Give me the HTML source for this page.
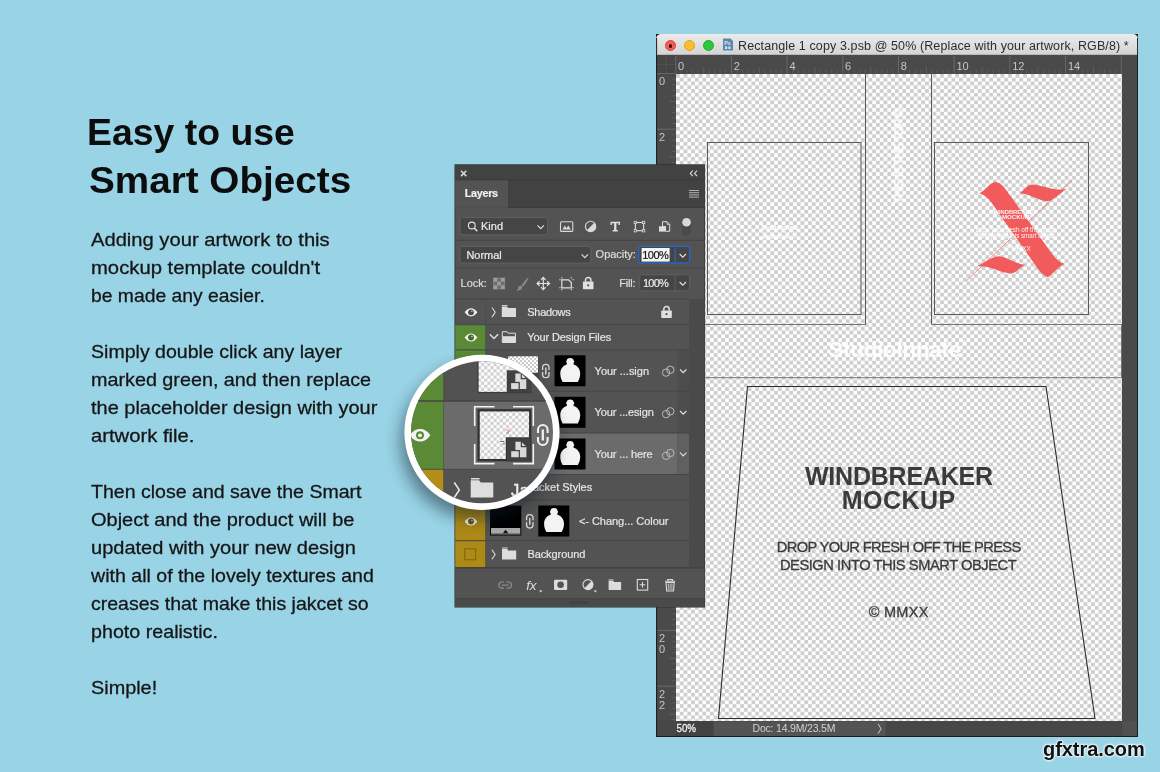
<!DOCTYPE html>
<html lang="en">
<head>
<meta charset="utf-8">
<title>Easy to use Smart Objects</title>
<style>
*{box-sizing:border-box;margin:0;padding:0}
html,body{width:1160px;height:772px;overflow:hidden}
body{background:#99d3e6;font-family:"Liberation Sans",Arial,sans-serif;position:relative;color:#111}
.abs{position:absolute}
#stage{position:absolute;left:0;top:0;width:1160px;height:772px;will-change:transform;transform:translateZ(0)}
/* ---------- left copy ---------- */
#copy h1{position:absolute;left:88px;top:108.900px;font-size:37px;line-height:48.2px;font-weight:700;color:#0d0d0d;white-space:nowrap}
#copy h1 span{display:inline-block;position:relative;transform-origin:0 50%}
#copy p{-webkit-text-stroke:.28px #151515;position:absolute;left:91px;font-size:18.500px;line-height:28px;color:#151515;white-space:nowrap;transform-origin:0 50%}
/* ---------- document window ---------- */
#win{position:absolute;left:656px;top:34px;width:482px;height:703px;background:#4a4a4a;overflow:hidden;}
#tbar{position:absolute;left:0;top:0;width:482px;height:21px;background:#1c1c1c}
#tbar:before{content:"";position:absolute;left:.4px;top:.3px;right:.3px;bottom:0;border-radius:5px 5px 0 0;background:linear-gradient(#ececec,#d4d4d4);border-bottom:1px solid #b8b8b8}
#tbar .dot{position:absolute;top:6.100px;width:11.400px;height:11.400px;border-radius:50%}
#tbar .t{position:absolute;left:82px;top:3.6px;font-size:12.5px;line-height:16px;color:#2e2e2e;white-space:nowrap;letter-spacing:.11px}
#canvas{position:absolute;left:19.7px;top:39.5px;width:446.5px;height:647.5px;background:repeating-conic-gradient(#fdfdfd 0% 25%,#cecece 0% 50%) 0 0/7.55px 7.55px}
#hr{position:absolute;left:0;top:21px;width:482px;height:19px;background:#4a4a4a}
#vr{position:absolute;left:0;top:40px;width:20px;height:647px;background:#4a4a4a}
#status{position:absolute;left:0;top:687px;width:482px;height:16px;background:#4a4a4a}
.rl{position:absolute;font-size:12px;color:#c9c9c9;line-height:12px}
/* ---------- watermark ---------- */
#wm{position:absolute;left:1043px;top:738px;font-size:20px;font-weight:700;letter-spacing:-.05px;color:#111;text-shadow:0 0 3px #fff,0 0 3px #fff,0 0 2px #fff}
</style>
</head>
<body>
<div id="stage">

<div id="copy">
<h1><span style="left:-1px;transform:scaleX(1.011)">Easy to use</span><br><span style="left:1px;transform:scaleX(1.045)">Smart Objects</span></h1>
<p style="top:225.6px;transform:scaleX(1.0897)">Adding your artwork to this</p>
<p style="top:253.6px;transform:scaleX(1.0950)">mockup template couldn't</p>
<p style="top:281.6px;transform:scaleX(1.0433)">be made any easier.</p>
<p style="top:337.6px;transform:scaleX(1.0569)">Simply double click any layer</p>
<p style="top:365.6px;transform:scaleX(1.0678)">marked green, and then replace</p>
<p style="top:393.6px;transform:scaleX(1.0792)">the placeholder design with your</p>
<p style="top:421.6px;transform:scaleX(1.0939)">artwork file.</p>
<p style="top:477.6px;transform:scaleX(1.0565)">Then close and save the Smart</p>
<p style="top:505.6px;transform:scaleX(1.0810)">Object and the product will be</p>
<p style="top:533.6px;transform:scaleX(1.0817)">updated with your new design</p>
<p style="top:561.6px;transform:scaleX(1.0579)">with all of the lovely textures and</p>
<p style="top:589.6px;transform:scaleX(1.0544)">creases that make this jakcet so</p>
<p style="top:617.6px;transform:scaleX(1.0634)">photo realistic.</p>
<p style="top:673.6px;transform:scaleX(1.0723)">Simple!</p>
</div>

<div id="win">
  <div id="tbar">
    <div class="dot" style="left:8.900px;background:#f25e57;border:.5px solid #d9463f"></div>
    <div class="dot" style="left:27.700px;background:#fbbe2f;border:.5px solid #dda022"></div>
    <div class="dot" style="left:46.600px;background:#2bc840;border:.5px solid #1eaa30"></div>
    <div class="abs" style="left:12.800px;top:10px;width:3.600px;height:3.600px;border-radius:50%;background:#4a0a07"></div>
    <div class="t">Rectangle 1 copy 3.psb @ 50% (Replace with your artwork, RGB/8) *</div>
  </div>
  <div id="hr"></div>
  <div id="vr"></div>
  <div id="canvas"></div>
  <div id="status"></div>
</div>

<svg id="art" class="abs" style="left:656px;top:34px" width="482" height="703" viewBox="656 34 482 703">
<style>.rt{font:11px "Liberation Sans",Arial,sans-serif;fill:#c6c6c6}.ol{fill:none;stroke:#5a5a5a;stroke-width:1}.wt{font-family:"Liberation Sans",Arial,sans-serif;font-weight:700;fill:#fff}.dk{font-family:"Liberation Sans",Arial,sans-serif;fill:#3b3b3b}</style>
<g id="rulers">
<rect x="656" y="55" width="20" height="18.5" fill="#454545"/>
<path d="M656.5 64.5H675.5M666 55.5V73" stroke="#666" stroke-width=".7" stroke-dasharray="1 1"/>
<path d="M675.7 56V73.5" stroke="#6c6c6c" stroke-width=".9"/>
<path d="M681.3 70V73.5" stroke="#636363" stroke-width=".7"/>
<path d="M686.8 70V73.5" stroke="#636363" stroke-width=".7"/>
<path d="M692.4 70V73.5" stroke="#636363" stroke-width=".7"/>
<path d="M698.0 70V73.5" stroke="#636363" stroke-width=".7"/>
<path d="M703.6 67.5V73.5" stroke="#696969" stroke-width=".7"/>
<path d="M709.1 70V73.5" stroke="#636363" stroke-width=".7"/>
<path d="M714.7 70V73.5" stroke="#636363" stroke-width=".7"/>
<path d="M720.3 70V73.5" stroke="#636363" stroke-width=".7"/>
<path d="M725.8 70V73.5" stroke="#636363" stroke-width=".7"/>
<path d="M731.4 56V73.5" stroke="#6c6c6c" stroke-width=".9"/>
<path d="M737.0 70V73.5" stroke="#636363" stroke-width=".7"/>
<path d="M742.5 70V73.5" stroke="#636363" stroke-width=".7"/>
<path d="M748.1 70V73.5" stroke="#636363" stroke-width=".7"/>
<path d="M753.7 70V73.5" stroke="#636363" stroke-width=".7"/>
<path d="M759.2 67.5V73.5" stroke="#696969" stroke-width=".7"/>
<path d="M764.8 70V73.5" stroke="#636363" stroke-width=".7"/>
<path d="M770.4 70V73.5" stroke="#636363" stroke-width=".7"/>
<path d="M776.0 70V73.5" stroke="#636363" stroke-width=".7"/>
<path d="M781.5 70V73.5" stroke="#636363" stroke-width=".7"/>
<path d="M787.1 56V73.5" stroke="#6c6c6c" stroke-width=".9"/>
<path d="M792.7 70V73.5" stroke="#636363" stroke-width=".7"/>
<path d="M798.2 70V73.5" stroke="#636363" stroke-width=".7"/>
<path d="M803.8 70V73.5" stroke="#636363" stroke-width=".7"/>
<path d="M809.4 70V73.5" stroke="#636363" stroke-width=".7"/>
<path d="M815.0 67.5V73.5" stroke="#696969" stroke-width=".7"/>
<path d="M820.5 70V73.5" stroke="#636363" stroke-width=".7"/>
<path d="M826.1 70V73.5" stroke="#636363" stroke-width=".7"/>
<path d="M831.7 70V73.5" stroke="#636363" stroke-width=".7"/>
<path d="M837.2 70V73.5" stroke="#636363" stroke-width=".7"/>
<path d="M842.8 56V73.5" stroke="#6c6c6c" stroke-width=".9"/>
<path d="M848.4 70V73.5" stroke="#636363" stroke-width=".7"/>
<path d="M853.9 70V73.5" stroke="#636363" stroke-width=".7"/>
<path d="M859.5 70V73.5" stroke="#636363" stroke-width=".7"/>
<path d="M865.1 70V73.5" stroke="#636363" stroke-width=".7"/>
<path d="M870.7 67.5V73.5" stroke="#696969" stroke-width=".7"/>
<path d="M876.2 70V73.5" stroke="#636363" stroke-width=".7"/>
<path d="M881.8 70V73.5" stroke="#636363" stroke-width=".7"/>
<path d="M887.4 70V73.5" stroke="#636363" stroke-width=".7"/>
<path d="M892.9 70V73.5" stroke="#636363" stroke-width=".7"/>
<path d="M898.5 56V73.5" stroke="#6c6c6c" stroke-width=".9"/>
<path d="M904.1 70V73.5" stroke="#636363" stroke-width=".7"/>
<path d="M909.6 70V73.5" stroke="#636363" stroke-width=".7"/>
<path d="M915.2 70V73.5" stroke="#636363" stroke-width=".7"/>
<path d="M920.8 70V73.5" stroke="#636363" stroke-width=".7"/>
<path d="M926.4 67.5V73.5" stroke="#696969" stroke-width=".7"/>
<path d="M931.9 70V73.5" stroke="#636363" stroke-width=".7"/>
<path d="M937.5 70V73.5" stroke="#636363" stroke-width=".7"/>
<path d="M943.1 70V73.5" stroke="#636363" stroke-width=".7"/>
<path d="M948.6 70V73.5" stroke="#636363" stroke-width=".7"/>
<path d="M954.2 56V73.5" stroke="#6c6c6c" stroke-width=".9"/>
<path d="M959.8 70V73.5" stroke="#636363" stroke-width=".7"/>
<path d="M965.3 70V73.5" stroke="#636363" stroke-width=".7"/>
<path d="M970.9 70V73.5" stroke="#636363" stroke-width=".7"/>
<path d="M976.5 70V73.5" stroke="#636363" stroke-width=".7"/>
<path d="M982.1 67.5V73.5" stroke="#696969" stroke-width=".7"/>
<path d="M987.6 70V73.5" stroke="#636363" stroke-width=".7"/>
<path d="M993.2 70V73.5" stroke="#636363" stroke-width=".7"/>
<path d="M998.8 70V73.5" stroke="#636363" stroke-width=".7"/>
<path d="M1004.3 70V73.5" stroke="#636363" stroke-width=".7"/>
<path d="M1009.9 56V73.5" stroke="#6c6c6c" stroke-width=".9"/>
<path d="M1015.5 70V73.5" stroke="#636363" stroke-width=".7"/>
<path d="M1021.0 70V73.5" stroke="#636363" stroke-width=".7"/>
<path d="M1026.6 70V73.5" stroke="#636363" stroke-width=".7"/>
<path d="M1032.2 70V73.5" stroke="#636363" stroke-width=".7"/>
<path d="M1037.8 67.5V73.5" stroke="#696969" stroke-width=".7"/>
<path d="M1043.3 70V73.5" stroke="#636363" stroke-width=".7"/>
<path d="M1048.9 70V73.5" stroke="#636363" stroke-width=".7"/>
<path d="M1054.5 70V73.5" stroke="#636363" stroke-width=".7"/>
<path d="M1060.0 70V73.5" stroke="#636363" stroke-width=".7"/>
<path d="M1065.6 56V73.5" stroke="#6c6c6c" stroke-width=".9"/>
<path d="M1071.2 70V73.5" stroke="#636363" stroke-width=".7"/>
<path d="M1076.7 70V73.5" stroke="#636363" stroke-width=".7"/>
<path d="M1082.3 70V73.5" stroke="#636363" stroke-width=".7"/>
<path d="M1087.9 70V73.5" stroke="#636363" stroke-width=".7"/>
<path d="M1093.5 67.5V73.5" stroke="#696969" stroke-width=".7"/>
<path d="M1099.0 70V73.5" stroke="#636363" stroke-width=".7"/>
<path d="M1104.6 70V73.5" stroke="#636363" stroke-width=".7"/>
<path d="M1110.2 70V73.5" stroke="#636363" stroke-width=".7"/>
<path d="M1115.7 70V73.5" stroke="#636363" stroke-width=".7"/>
<path d="M1121.3 56V73.5" stroke="#6c6c6c" stroke-width=".9"/>
<path d="M657 73.5H675.7" stroke="#6c6c6c" stroke-width=".9"/>
<path d="M672 79.1H675.7" stroke="#636363" stroke-width=".7"/>
<path d="M672 84.6H675.7" stroke="#636363" stroke-width=".7"/>
<path d="M672 90.2H675.7" stroke="#636363" stroke-width=".7"/>
<path d="M672 95.8H675.7" stroke="#636363" stroke-width=".7"/>
<path d="M669.5 101.3H675.7" stroke="#696969" stroke-width=".7"/>
<path d="M672 106.9H675.7" stroke="#636363" stroke-width=".7"/>
<path d="M672 112.5H675.7" stroke="#636363" stroke-width=".7"/>
<path d="M672 118.1H675.7" stroke="#636363" stroke-width=".7"/>
<path d="M672 123.6H675.7" stroke="#636363" stroke-width=".7"/>
<path d="M657 129.2H675.7" stroke="#6c6c6c" stroke-width=".9"/>
<path d="M672 134.8H675.7" stroke="#636363" stroke-width=".7"/>
<path d="M672 140.3H675.7" stroke="#636363" stroke-width=".7"/>
<path d="M672 145.9H675.7" stroke="#636363" stroke-width=".7"/>
<path d="M672 151.5H675.7" stroke="#636363" stroke-width=".7"/>
<path d="M669.5 157.1H675.7" stroke="#696969" stroke-width=".7"/>
<path d="M672 162.6H675.7" stroke="#636363" stroke-width=".7"/>
<path d="M672 168.2H675.7" stroke="#636363" stroke-width=".7"/>
<path d="M672 173.8H675.7" stroke="#636363" stroke-width=".7"/>
<path d="M672 179.3H675.7" stroke="#636363" stroke-width=".7"/>
<path d="M657 184.9H675.7" stroke="#6c6c6c" stroke-width=".9"/>
<path d="M672 190.5H675.7" stroke="#636363" stroke-width=".7"/>
<path d="M672 196.0H675.7" stroke="#636363" stroke-width=".7"/>
<path d="M672 201.6H675.7" stroke="#636363" stroke-width=".7"/>
<path d="M672 207.2H675.7" stroke="#636363" stroke-width=".7"/>
<path d="M669.5 212.8H675.7" stroke="#696969" stroke-width=".7"/>
<path d="M672 218.3H675.7" stroke="#636363" stroke-width=".7"/>
<path d="M672 223.9H675.7" stroke="#636363" stroke-width=".7"/>
<path d="M672 229.5H675.7" stroke="#636363" stroke-width=".7"/>
<path d="M672 235.0H675.7" stroke="#636363" stroke-width=".7"/>
<path d="M657 240.6H675.7" stroke="#6c6c6c" stroke-width=".9"/>
<path d="M672 246.2H675.7" stroke="#636363" stroke-width=".7"/>
<path d="M672 251.7H675.7" stroke="#636363" stroke-width=".7"/>
<path d="M672 257.3H675.7" stroke="#636363" stroke-width=".7"/>
<path d="M672 262.9H675.7" stroke="#636363" stroke-width=".7"/>
<path d="M669.5 268.4H675.7" stroke="#696969" stroke-width=".7"/>
<path d="M672 274.0H675.7" stroke="#636363" stroke-width=".7"/>
<path d="M672 279.6H675.7" stroke="#636363" stroke-width=".7"/>
<path d="M672 285.2H675.7" stroke="#636363" stroke-width=".7"/>
<path d="M672 290.7H675.7" stroke="#636363" stroke-width=".7"/>
<path d="M657 296.3H675.7" stroke="#6c6c6c" stroke-width=".9"/>
<path d="M672 301.9H675.7" stroke="#636363" stroke-width=".7"/>
<path d="M672 307.4H675.7" stroke="#636363" stroke-width=".7"/>
<path d="M672 313.0H675.7" stroke="#636363" stroke-width=".7"/>
<path d="M672 318.6H675.7" stroke="#636363" stroke-width=".7"/>
<path d="M669.5 324.1H675.7" stroke="#696969" stroke-width=".7"/>
<path d="M672 329.7H675.7" stroke="#636363" stroke-width=".7"/>
<path d="M672 335.3H675.7" stroke="#636363" stroke-width=".7"/>
<path d="M672 340.9H675.7" stroke="#636363" stroke-width=".7"/>
<path d="M672 346.4H675.7" stroke="#636363" stroke-width=".7"/>
<path d="M657 352.0H675.7" stroke="#6c6c6c" stroke-width=".9"/>
<path d="M672 357.6H675.7" stroke="#636363" stroke-width=".7"/>
<path d="M672 363.1H675.7" stroke="#636363" stroke-width=".7"/>
<path d="M672 368.7H675.7" stroke="#636363" stroke-width=".7"/>
<path d="M672 374.3H675.7" stroke="#636363" stroke-width=".7"/>
<path d="M669.5 379.9H675.7" stroke="#696969" stroke-width=".7"/>
<path d="M672 385.4H675.7" stroke="#636363" stroke-width=".7"/>
<path d="M672 391.0H675.7" stroke="#636363" stroke-width=".7"/>
<path d="M672 396.6H675.7" stroke="#636363" stroke-width=".7"/>
<path d="M672 402.1H675.7" stroke="#636363" stroke-width=".7"/>
<path d="M657 407.7H675.7" stroke="#6c6c6c" stroke-width=".9"/>
<path d="M672 413.3H675.7" stroke="#636363" stroke-width=".7"/>
<path d="M672 418.8H675.7" stroke="#636363" stroke-width=".7"/>
<path d="M672 424.4H675.7" stroke="#636363" stroke-width=".7"/>
<path d="M672 430.0H675.7" stroke="#636363" stroke-width=".7"/>
<path d="M669.5 435.6H675.7" stroke="#696969" stroke-width=".7"/>
<path d="M672 441.1H675.7" stroke="#636363" stroke-width=".7"/>
<path d="M672 446.7H675.7" stroke="#636363" stroke-width=".7"/>
<path d="M672 452.3H675.7" stroke="#636363" stroke-width=".7"/>
<path d="M672 457.8H675.7" stroke="#636363" stroke-width=".7"/>
<path d="M657 463.4H675.7" stroke="#6c6c6c" stroke-width=".9"/>
<path d="M672 469.0H675.7" stroke="#636363" stroke-width=".7"/>
<path d="M672 474.5H675.7" stroke="#636363" stroke-width=".7"/>
<path d="M672 480.1H675.7" stroke="#636363" stroke-width=".7"/>
<path d="M672 485.7H675.7" stroke="#636363" stroke-width=".7"/>
<path d="M669.5 491.2H675.7" stroke="#696969" stroke-width=".7"/>
<path d="M672 496.8H675.7" stroke="#636363" stroke-width=".7"/>
<path d="M672 502.4H675.7" stroke="#636363" stroke-width=".7"/>
<path d="M672 508.0H675.7" stroke="#636363" stroke-width=".7"/>
<path d="M672 513.5H675.7" stroke="#636363" stroke-width=".7"/>
<path d="M657 519.1H675.7" stroke="#6c6c6c" stroke-width=".9"/>
<path d="M672 524.7H675.7" stroke="#636363" stroke-width=".7"/>
<path d="M672 530.2H675.7" stroke="#636363" stroke-width=".7"/>
<path d="M672 535.8H675.7" stroke="#636363" stroke-width=".7"/>
<path d="M672 541.4H675.7" stroke="#636363" stroke-width=".7"/>
<path d="M669.5 547.0H675.7" stroke="#696969" stroke-width=".7"/>
<path d="M672 552.5H675.7" stroke="#636363" stroke-width=".7"/>
<path d="M672 558.1H675.7" stroke="#636363" stroke-width=".7"/>
<path d="M672 563.7H675.7" stroke="#636363" stroke-width=".7"/>
<path d="M672 569.2H675.7" stroke="#636363" stroke-width=".7"/>
<path d="M657 574.8H675.7" stroke="#6c6c6c" stroke-width=".9"/>
<path d="M672 580.4H675.7" stroke="#636363" stroke-width=".7"/>
<path d="M672 585.9H675.7" stroke="#636363" stroke-width=".7"/>
<path d="M672 591.5H675.7" stroke="#636363" stroke-width=".7"/>
<path d="M672 597.1H675.7" stroke="#636363" stroke-width=".7"/>
<path d="M669.5 602.6H675.7" stroke="#696969" stroke-width=".7"/>
<path d="M672 608.2H675.7" stroke="#636363" stroke-width=".7"/>
<path d="M672 613.8H675.7" stroke="#636363" stroke-width=".7"/>
<path d="M672 619.4H675.7" stroke="#636363" stroke-width=".7"/>
<path d="M672 624.9H675.7" stroke="#636363" stroke-width=".7"/>
<path d="M657 630.5H675.7" stroke="#6c6c6c" stroke-width=".9"/>
<path d="M672 636.1H675.7" stroke="#636363" stroke-width=".7"/>
<path d="M672 641.6H675.7" stroke="#636363" stroke-width=".7"/>
<path d="M672 647.2H675.7" stroke="#636363" stroke-width=".7"/>
<path d="M672 652.8H675.7" stroke="#636363" stroke-width=".7"/>
<path d="M669.5 658.4H675.7" stroke="#696969" stroke-width=".7"/>
<path d="M672 663.9H675.7" stroke="#636363" stroke-width=".7"/>
<path d="M672 669.5H675.7" stroke="#636363" stroke-width=".7"/>
<path d="M672 675.1H675.7" stroke="#636363" stroke-width=".7"/>
<path d="M672 680.6H675.7" stroke="#636363" stroke-width=".7"/>
<path d="M657 686.2H675.7" stroke="#6c6c6c" stroke-width=".9"/>
<path d="M672 691.8H675.7" stroke="#636363" stroke-width=".7"/>
<path d="M672 697.3H675.7" stroke="#636363" stroke-width=".7"/>
<path d="M672 702.9H675.7" stroke="#636363" stroke-width=".7"/>
<path d="M672 708.5H675.7" stroke="#636363" stroke-width=".7"/>
<path d="M669.5 714.0H675.7" stroke="#696969" stroke-width=".7"/>
<path d="M672 719.6H675.7" stroke="#636363" stroke-width=".7"/>
<text x="678.0" y="70" class="rt">0</text>
<text x="733.7" y="70" class="rt">2</text>
<text x="789.4" y="70" class="rt">4</text>
<text x="845.1" y="70" class="rt">6</text>
<text x="900.8" y="70" class="rt">8</text>
<text x="956.5" y="70" class="rt">10</text>
<text x="1012.2" y="70" class="rt">12</text>
<text x="1067.9" y="70" class="rt">14</text>
<text x="659" y="85.0" class="rt">0</text>
<text x="659" y="140.7" class="rt">2</text>
<text x="659" y="196.4" class="rt">4</text>
<text x="659" y="252.1" class="rt">6</text>
<text x="659" y="307.8" class="rt">8</text>
<text x="659" y="363.5" class="rt">1</text>
<text x="659" y="374.5" class="rt">0</text>
<text x="659" y="419.2" class="rt">1</text>
<text x="659" y="430.2" class="rt">2</text>
<text x="659" y="474.9" class="rt">1</text>
<text x="659" y="485.9" class="rt">4</text>
<text x="659" y="530.6" class="rt">1</text>
<text x="659" y="541.6" class="rt">6</text>
<text x="659" y="586.3" class="rt">1</text>
<text x="659" y="597.3" class="rt">8</text>
<text x="659" y="642.0" class="rt">2</text>
<text x="659" y="653.0" class="rt">0</text>
<text x="659" y="697.7" class="rt">2</text>
<text x="659" y="708.7" class="rt">2</text>
</g>
<g id="outlines">
<path class="ol" d="M865.5 73.5V324.5M931.5 73.5V324.5"/>
<rect class="ol" x="707.5" y="142.5" width="153.5" height="172"/>
<rect class="ol" x="934.5" y="142.5" width="154" height="172"/>
<path class="ol" style="stroke:#747474" d="M865.5 324.500H703V377.700H1121.500V324.500H931.500"/>
<path class="ol" style="stroke:#2e2e2e;stroke-width:1.100" d="M747.5 386.5H1046L1095 718.5H718.5Z"/>
</g>
<g id="arttext">
<text class="dk" x="805" y="484.800" font-size="25" font-weight="700" textLength="188" lengthAdjust="spacing" id="wb1">WINDBREAKER</text>
<text class="dk" x="841.800" y="508.500" font-size="25" font-weight="700" textLength="113.400" lengthAdjust="spacing" id="wb2">MOCKUP</text>
<text class="dk" x="776.800" y="552" font-size="14.700" stroke="#3b3b3b" stroke-width=".3" textLength="244.400" lengthAdjust="spacing" id="dr1">DROP YOUR FRESH OFF THE PRESS</text>
<text class="dk" x="779.900" y="569.500" font-size="14.700" stroke="#3b3b3b" stroke-width=".3" textLength="236.800" lengthAdjust="spacing" id="dr2">DESIGN INTO THIS SMART OBJECT</text>
<text class="dk" x="868.700" y="617.400" font-size="14.500" stroke="#3b3b3b" stroke-width=".3" textLength="59.600" lengthAdjust="spacing" id="mm">© MMXX</text>
<text class="wt" x="828.300" y="357" font-size="22.500" textLength="133" lengthAdjust="spacing" opacity=".93" id="si">StudioInnate</text>
<text class="wt" x="961.500" y="346" font-size="7" opacity=".9">®</text>
<g opacity=".92">
<text class="wt" x="761" y="229.500" font-size="7.800" textLength="37.500" lengthAdjust="spacingAndGlyphs">StudioInnate</text>
<text class="wt" x="763" y="239" font-size="5.500" font-weight="400" textLength="33" lengthAdjust="spacingAndGlyphs">MOCKUP ©</text>
<text transform="translate(903.200 203.500) rotate(-90)" font-family="Liberation Sans,Arial,sans-serif" font-size="12" fill="#fff" stroke="#fff" stroke-width=".35" textLength="95" lengthAdjust="spacing">THIS IS THE TOP ©</text>
</g>
</g>
<g id="xlogo">
<path fill="#f15b5b" d="M979.400 193.300C984.500 191 988.500 184.500 994.500 182C999.500 182 1003 185.500 1006.500 190.500L1052.500 254.500C1055.500 258.500 1059 262 1064.200 264C1059 266.500 1054 272.500 1048 277.300C1043 275.500 1040 271.500 1037 267.500L991 202C988 198 984.500 195 979.400 193.300Z"/>
<path fill="#f15b5b" d="M1019.800 193.300C1024.500 189.500 1027 185 1032 184.400C1042 184.500 1054 192 1067.300 188.700C1060 192.500 1054.500 200.500 1047 201.200C1038 201 1029.500 193.500 1019.800 193.300Z"/>
<path fill="#f15b5b" d="M977.100 266.400C984 263.500 990.500 256.800 998.900 256.300C1007.500 256.800 1015 264 1025.300 264.800C1019.500 268 1016 272.500 1011.300 273.400C1001 273.500 990 265 977.100 266.400Z"/>
<path d="M1071.900 180.100L966.200 281.100" stroke="#f15b5b" stroke-width=".7" fill="none"/>
<g opacity=".93" font-family="Liberation Sans,Arial,sans-serif" fill="#fff">
<text x="993.400" y="213.500" font-size="6.200" font-weight="700" textLength="44.300" lengthAdjust="spacingAndGlyphs">WINDBREAKER</text>
<text x="1002" y="219" font-size="6.200" font-weight="700" textLength="27" lengthAdjust="spacingAndGlyphs">MOCKUP</text>
<text x="975.500" y="232" font-size="6.300" textLength="80.900" lengthAdjust="spacingAndGlyphs">Drop your fresh off the press</text>
<text x="977.900" y="238.200" font-size="6.300" textLength="76.900" lengthAdjust="spacingAndGlyphs">design into this smart object</text>
<text x="1005" y="250.700" font-size="6.300" textLength="25.700" lengthAdjust="spacingAndGlyphs">© MMXX</text>
</g>
</g>
<g id="statusbar">
<rect x="656" y="721" width="482" height="16.500" fill="#474747"/>
<rect x="676" y="721" width="37.600" height="16.500" fill="#424242"/>
<rect x="713.600" y="721.500" width="172" height="15.500" fill="#535353"/>
<path d="M1122.200 721H1137.500V733.500Q1137.500 736.500 1134.500 736.500H1122.200Z" fill="#505050"/><path d="M1137.500 733.500Q1137.500 736.500 1134.500 736.500H1138V733.500Z" fill="#1a1a1a"/>
<text x="676.500" y="731.900" font-family="Liberation Sans,Arial,sans-serif" font-size="10.500" fill="#f0f0f0" stroke="#f0f0f0" stroke-width=".3" textLength="19.500" lengthAdjust="spacingAndGlyphs">50%</text>
<text x="752.500" y="731.900" font-family="Liberation Sans,Arial,sans-serif" font-size="10.500" fill="#d2d2d2" textLength="83" lengthAdjust="spacing">Doc: 14.9M/23.5M</text>
<path d="M878 727L881 732L878 737" transform="translate(0 -3.200)" stroke="#d0d0d0" stroke-width="1" fill="none"/>
</g>
<path d="M656.600 38V736.500H1137.600V38" stroke="#1b1b1b" stroke-width="1" fill="none"/>
<g id="psicon">
<path d="M723 38.600H730.500L733 41V50.600H723Z" fill="#5b89ae"/>
<text x="724.200" y="45.300" font-family="Liberation Sans,Arial,sans-serif" font-size="5.500" font-weight="700" fill="#d7e6f3">Ps</text>
<rect x="725" y="46.500" width="2.200" height="2.500" fill="#d7e6f3"/><rect x="728.300" y="46.500" width="2.200" height="2.500" fill="#d7e6f3"/>
</g>
</svg>

<!--PANEL-->
<svg id="panel" class="abs" style="left:440px;top:150px" width="280" height="470" viewBox="440 150 280 470" font-family="Liberation Sans,Arial,sans-serif">
<defs>
<g id="eye"><path d="M-6.400 0C-4.300-2.900-2.200-4.100 0-4.100S4.300-2.900 6.400 0C4.300 2.900 2.200 4.100 0 4.100S-4.300 2.900-6.400 0Z" fill="#f1f1f1"/><circle r="2.900" style="fill:var(--p,#4a4a4a)"/><circle cx=".9" cy="-1" r=".8" fill="#f1f1f1" opacity=".8"/></g>
<g id="folder"><path d="M0 1.200H5.200L6.200 2.600H14.200V11.600H0Z" fill="#dcdcdc"/><path d="M0 .2H5.600" stroke="#dcdcdc" stroke-width="1"/></g>
<g id="folderopen"><path d="M.5 11.500V.700H5.300L6.300 2.200H13.700V11.500Z" fill="none" stroke="#dcdcdc" stroke-width="1"/><path d="M.5 5.200H13.700V11.500H.5Z" fill="#dcdcdc"/></g>
<g id="chev"><path d="M-3.200-1.600L0 1.600L3.200-1.600" fill="none" stroke="#dedede" stroke-width="1.200"/></g>
<g id="chevr"><path d="M-1.600-4.800L1.600 0L-1.600 4.800" fill="none" stroke="#dedede" stroke-width="1.100"/></g>
<g id="chain"><path d="M-3.200-1V-3.500A3.200 3.200 0 0 1 3.200-3.500V-1M-3.200 1V3.500A3.200 3.200 0 0 0 3.200 3.500V1" fill="none" stroke="#d9d9d9" stroke-width="1.300"/><path d="M0-3.400V3.400" stroke="#d9d9d9" stroke-width="1.400"/></g>
<g id="mask"><rect width="31" height="31" fill="#000"/><path d="M12.300 5.300C12.300 3.400 13.500 2.600 15.700 2.600S19.100 3.400 19.100 5.300L19.700 5.800V7.300H19.100V9.300C23.200 10.600 25.700 14 25.700 18.300C25.700 21.800 24.600 24.500 23.300 26.600H8.100C6.800 24.500 5.800 21.800 5.800 18.300C5.800 14 8.200 10.600 12.300 9.300V7.300H11.700V5.800Z" fill="#f3f3f3"/></g>
<g id="lock"><path d="M2.600 5.200V3.600A2.700 2.700 0 0 1 8 3.600V5.200" fill="none" stroke="#e0e0e0" stroke-width="1.500"/><rect x="0" y="5" width="10.600" height="7.600" rx=".8" fill="#e0e0e0"/><circle cx="5.300" cy="8.700" r="1.100" fill="#535353"/></g>
<g id="circles"><circle cx="2.100" cy="-1.400" r="3.700" fill="none" stroke="#b9b9b9" stroke-width="1"/><circle cx="-2.100" cy="1.400" r="3.700" fill="none" stroke="#b9b9b9" stroke-width="1"/></g>
<pattern id="chk" width="4" height="4" patternUnits="userSpaceOnUse"><rect width="4" height="4" fill="#fff"/><rect width="2" height="2" fill="#ccc"/><rect x="2" y="2" width="2" height="2" fill="#ccc"/></pattern>
<g id="sobadge"><rect x="0" y="0" width="14" height="14" fill="#444"/><path d="M3 2.500H8L11 5.500V11.500H7V8.500H3Z" fill="#d8d8d8"/><rect x="2.500" y="8" width="5" height="4" fill="#444"/><rect x="3.300" y="8.800" width="3.600" height="2.700" fill="#d8d8d8"/><path d="M8 2.500V5.500H11" fill="none" stroke="#444" stroke-width=".8"/></g>
</defs>
<rect x="454.500" y="164.300" width="250.600" height="443.200" fill="#2d2d2d"/>
<rect x="455.300" y="165.100" width="249.100" height="441.900" fill="#535353"/>
<rect x="455.300" y="165.100" width="249.100" height="42.400" fill="#424242"/>
<path d="M455.300 180H704.400" stroke="#383838" stroke-width=".8"/>
<rect x="455.300" y="180.400" width="52.700" height="27.200" fill="#535353"/>
<path d="M508 207.500H704.400" stroke="#3a3a3a" stroke-width=".8"/>
<path d="M461 170.800L466.300 176.100M466.300 170.800L461 176.100" stroke="#d9d9d9" stroke-width="1.500"/>
<path d="M692.800 170.700L690.300 173.400L692.800 176.100M697 170.700L694.500 173.400L697 176.100" stroke="#dcdcdc" stroke-width="1.100" fill="none"/>
<text x="464.8" y="197.0" font-size="10.8" fill="#f0f0f0" stroke="#f0f0f0" stroke-width=".2" font-weight="700" textLength="33.3" lengthAdjust="spacing" >Layers</text>
<path d="M689 190.500H699M689 192.700H699M689 194.900H699M689 197.100H699" stroke="#d6d6d6" stroke-width=".75"/>
<rect x="460" y="217.600" width="87.600" height="17.200" rx="2" fill="#454545" stroke="#636363" stroke-width=".9"/>
<circle cx="471.800" cy="225.500" r="3.400" fill="none" stroke="#e6e6e6" stroke-width="1.100"/><path d="M474.200 228L477.300 231.200" stroke="#e6e6e6" stroke-width="1.400"/>
<text x="481.0" y="230.0" font-size="11" fill="#ececec" stroke="#ececec" stroke-width=".2" textLength="22.0" lengthAdjust="spacing" >Kind</text>
<use href="#chev" x="540.700" y="227"/>
<rect x="560.500" y="221.800" width="12.300" height="9.600" rx="1" fill="none" stroke="#dadada" stroke-width="1.100"/><path d="M562.500 229.500L564.800 225.500L566.500 228.200L568.300 225.500L570.800 229.500Z" fill="#dadada"/>
<circle cx="590.600" cy="226.500" r="5.200" fill="none" stroke="#dadada" stroke-width="1.100"/><path d="M586.900 230.200A5.200 5.200 0 0 0 594.300 222.800Z" fill="#dadada"/>
<path d="M610.500 221.700H620V224.900H618.600V223.300H616.400V230.100H617.800V231.500H612.700V230.100H614.100V223.300H611.900V224.900H610.500Z" fill="#dedede"/>
<rect x="635.400" y="222.500" width="8.200" height="8.200" fill="none" stroke="#dedede" stroke-width="1.100"/><rect x="634.2" y="221.3" width="2.300" height="2.300" fill="#4f4f4f" stroke="#dedede" stroke-width=".8"/><rect x="634.2" y="229.6" width="2.300" height="2.300" fill="#4f4f4f" stroke="#dedede" stroke-width=".8"/><rect x="642.5" y="221.3" width="2.300" height="2.300" fill="#4f4f4f" stroke="#dedede" stroke-width=".8"/><rect x="642.5" y="229.6" width="2.300" height="2.300" fill="#4f4f4f" stroke="#dedede" stroke-width=".8"/>
<path d="M662.500 221.700H667L669.700 224.400V231.300H665.500V226.500H662.500Z" fill="none" stroke="#dedede" stroke-width="1"/><rect x="659" y="226.300" width="6.300" height="5.300" fill="#dedede"/><path d="M667 221.700V224.400H669.700" fill="none" stroke="#dedede" stroke-width=".8"/>
<rect x="682" y="218.300" width="9" height="17.200" rx="4.500" fill="#4a4a4a"/><circle cx="686.500" cy="222.300" r="4.300" fill="#d9d9d9"/>
<path d="M455.300 240.300H704.400" stroke="#444" stroke-width="1"/>
<rect x="460" y="246.300" width="131" height="16.800" rx="2" fill="#454545" stroke="#636363" stroke-width=".9"/>
<text x="466.4" y="258.9" font-size="11" fill="#ececec" stroke="#ececec" stroke-width=".2" textLength="35.3" lengthAdjust="spacing" >Normal</text>
<use href="#chev" x="584.800" y="256"/>
<text x="595.6" y="258.3" font-size="11" fill="#dedede" stroke="#dedede" stroke-width=".2" textLength="40.2" lengthAdjust="spacing" >Opacity:</text>
<rect x="638.800" y="246.300" width="50.800" height="16.800" rx="2" fill="#454545" stroke="#2d63b8" stroke-width="1.500"/>
<path d="M675.200 246.300V263.100" stroke="#2d63b8" stroke-width="1.200"/>
<rect x="641.600" y="248" width="28" height="13.600" fill="#f4f4f4"/>
<text x="642.3" y="258.6" font-size="11" fill="#111" stroke="#111" stroke-width=".2" textLength="26.5" lengthAdjust="spacing" >100%</text>
<use href="#chev" x="682.800" y="255.600"/>
<path d="M455.300 268H704.400" stroke="#444" stroke-width="1"/>
<text x="460.6" y="286.5" font-size="11" fill="#dedede" stroke="#dedede" stroke-width=".2" textLength="26.2" lengthAdjust="spacing" >Lock:</text>
<rect x="493.500" y="278" width="11.200" height="11" fill="#6d6d6d" stroke="#8a8a8a" stroke-width=".7"/><rect x="493.5" y="278.0" width="3.700" height="3.700" fill="#9d9d9d"/><rect x="493.5" y="285.3" width="3.700" height="3.700" fill="#9d9d9d"/><rect x="497.2" y="281.7" width="3.700" height="3.700" fill="#9d9d9d"/><rect x="501.0" y="278.0" width="3.700" height="3.700" fill="#9d9d9d"/><rect x="501.0" y="285.3" width="3.700" height="3.700" fill="#9d9d9d"/>
<path d="M528 277.500C526 279.500 523 283 521.500 285.300L523 286.500C525 284.500 527.500 280.500 528.600 278Z" fill="#8a8a8a"/><path d="M521 285.800C519.500 285.600 518.300 286.600 518 288.300C517.800 289.300 517.300 290 516.600 290.300C518.800 291 521.500 290.300 522.400 287Z" fill="#8a8a8a"/>
<path d="M543.300 277.500V289.500M537.300 283.500H549.300" stroke="#e2e2e2" stroke-width="1.200"/><path d="M541 279.800L543.300 277.300L545.600 279.800M541 287.200L543.300 289.700L545.600 287.200M539.600 281.200L537.100 283.500L539.600 285.800M547 281.200L549.500 283.500L547 285.800" fill="none" stroke="#e2e2e2" stroke-width="1.200"/>
<path d="M561.800 279.800H568.500L571.300 282.600V287.800H561.800Z" fill="none" stroke="#e2e2e2" stroke-width="1.200"/><path d="M561.800 277.300V278.600M559.300 279.800H560.600M559.300 287.800H560.600M561.800 289V290.300M571.300 289V290.300M572.500 287.800H573.800M571.300 277.300V278.600M572.500 279.800H573.800" stroke="#e2e2e2" stroke-width="1.100"/>
<use href="#lock" x="582.900" y="276.600"/>
<text x="619.3" y="286.5" font-size="11" fill="#dedede" stroke="#dedede" stroke-width=".2" textLength="16.2" lengthAdjust="spacing" >Fill:</text>
<rect x="639.700" y="274.800" width="50" height="16" rx="2" fill="#454545" stroke="#636363" stroke-width=".9"/>
<path d="M675.200 274.800V290.800" stroke="#636363" stroke-width=".9"/>
<text x="642.9" y="286.8" font-size="11" fill="#ececec" stroke="#ececec" stroke-width=".2" textLength="25.9" lengthAdjust="spacing" >100%</text>
<use href="#chev" x="682.800" y="283.600"/>
<rect x="689" y="299" width="15.400" height="269" fill="#4a4a4a"/>
<rect x="485.500" y="433" width="192" height="41.500" fill="#6b6b6b"/>
<rect x="677.500" y="433" width="11.500" height="41.500" fill="#606060"/>
<rect x="677.500" y="349.900" width="11.500" height="83.100" fill="#4d4d4d"/>
<rect x="455.300" y="324.7" width="30.200" height="25.2" fill="#5b8a37"/>
<rect x="455.300" y="349.9" width="30.200" height="41.3" fill="#5b8a37"/>
<rect x="455.300" y="391.2" width="30.200" height="41.8" fill="#5b8a37"/>
<rect x="455.300" y="433.0" width="30.200" height="41.5" fill="#5b8a37"/>
<rect x="455.300" y="474.5" width="30.200" height="25.5" fill="#ad8a16"/>
<rect x="455.300" y="500.0" width="30.200" height="40.7" fill="#ad8a16"/>
<rect x="455.300" y="540.7" width="30.200" height="26.9" fill="#ad8a16"/>
<path d="M455.300 299.0H689" stroke="#454545" stroke-width="1"/>
<path d="M455.300 324.7H689" stroke="#454545" stroke-width="1"/>
<path d="M455.300 349.9H689" stroke="#454545" stroke-width="1"/>
<path d="M455.300 391.2H689" stroke="#454545" stroke-width="1"/>
<path d="M455.300 433.0H689" stroke="#454545" stroke-width="1"/>
<path d="M455.300 474.5H689" stroke="#454545" stroke-width="1"/>
<path d="M455.300 500.0H689" stroke="#454545" stroke-width="1"/>
<path d="M455.300 540.7H689" stroke="#454545" stroke-width="1"/>
<path d="M455.300 567.6H689" stroke="#454545" stroke-width="1"/>
<path d="M485.500 299V567.600" stroke="#484848" stroke-width=".8" opacity=".6"/>
<use href="#eye" x="471" y="312.300"/>
<use href="#chevr" x="493.600" y="312.300"/>
<use href="#folder" x="501.800" y="305.400"/>
<text x="527.3" y="315.8" font-size="11" fill="#e6e6e6" stroke="#e6e6e6" stroke-width=".2" textLength="43.4" lengthAdjust="spacing" >Shadows</text>
<use href="#lock" x="661.200" y="305.500"/>
<g style="--p:#3f6a22"><use href="#eye" x="471" y="337.500"/></g>
<use href="#chev" x="494" y="336.400" transform="translate(494 336.400) scale(1.3) translate(-494 -336.400)"/>
<use href="#folderopen" x="501.800" y="331"/>
<text x="527.3" y="341.0" font-size="11" fill="#e6e6e6" stroke="#e6e6e6" stroke-width=".2" textLength="83.9" lengthAdjust="spacing" >Your Design Files</text>
<rect x="507.300" y="355.8" width="31.100" height="31" fill="url(#chk)" stroke="#3d3d3d" stroke-width=".8"/>
<use href="#sobadge" x="524.400" y="372.8"/>
<use href="#chain" x="545.800" y="371.0"/>
<use href="#mask" x="554.500" y="355.3"/>
<text x="594.6" y="374.7" font-size="11" fill="#e6e6e6" stroke="#e6e6e6" stroke-width=".2" textLength="54.4" lengthAdjust="spacing" >Your ...sign</text>
<use href="#circles" x="668.200" y="371.2"/>
<use href="#chev" x="683.200" y="371.1"/>
<rect x="507.300" y="397.3" width="31.100" height="31" fill="url(#chk)" stroke="#3d3d3d" stroke-width=".8"/>
<use href="#sobadge" x="524.400" y="414.3"/>
<use href="#chain" x="545.800" y="412.5"/>
<use href="#mask" x="554.500" y="396.8"/>
<text x="594.6" y="416.2" font-size="11" fill="#e6e6e6" stroke="#e6e6e6" stroke-width=".2" textLength="59.2" lengthAdjust="spacing" >Your ...esign</text>
<use href="#circles" x="668.200" y="412.7"/>
<use href="#chev" x="683.200" y="412.6"/>
<rect x="507.300" y="439.0" width="31.100" height="31" fill="url(#chk)" stroke="#3d3d3d" stroke-width=".8"/>
<use href="#sobadge" x="524.400" y="456.0"/>
<use href="#chain" x="545.800" y="454.2"/>
<use href="#mask" x="554.500" y="438.5"/>
<text x="594.6" y="457.9" font-size="11" fill="#e6e6e6" stroke="#e6e6e6" stroke-width=".2" textLength="58.1" lengthAdjust="spacing" >Your ... here</text>
<use href="#circles" x="668.200" y="454.4"/>
<use href="#chev" x="683.200" y="454.3"/>
<text x="527.4" y="490.8" font-size="11" fill="#e6e6e6" stroke="#e6e6e6" stroke-width=".2" textLength="64.8" lengthAdjust="spacing" >Jacket Styles</text>
<g style="--p:#6e5508"><use href="#eye" x="471" y="521.500"/></g>
<rect x="490" y="505.500" width="31.300" height="30" fill="#000"/><rect x="491" y="528" width="29.300" height="6.500" fill="#a9a9a9"/><path d="M502.800 533.300L505.600 529.700L508.400 533.300Z" fill="#111"/><path d="M491 534H520.300" stroke="#333" stroke-width=".8"/>
<use href="#chain" x="529.800" y="521.300"/>
<use href="#mask" x="538.300" y="505.500"/>
<text x="578.9" y="525.3" font-size="11" fill="#e6e6e6" stroke="#e6e6e6" stroke-width=".2" textLength="89.6" lengthAdjust="spacing" >&lt;- Chang... Colour</text>
<rect x="464.700" y="548.800" width="11" height="11" fill="none" stroke="#7d6410" stroke-width="1"/>
<use href="#chevr" x="493.500" y="554.500"/>
<use href="#folder" x="502" y="547.800"/>
<text x="527.4" y="558.3" font-size="11" fill="#e6e6e6" stroke="#e6e6e6" stroke-width=".2" textLength="58.0" lengthAdjust="spacing" >Background</text>
<rect x="455.300" y="568" width="249.100" height="31" fill="#535353"/>
<path d="M455.300 568H704.400" stroke="#3f3f3f" stroke-width="1"/>
<path d="M504 582H502A3.100 3.100 0 0 0 502 588.200H504M506.400 582H508.400A3.100 3.100 0 0 1 508.400 588.200H506.400" fill="none" stroke="#8f8f8f" stroke-width="1.200"/><path d="M501.800 585.100H508.600" stroke="#8f8f8f" stroke-width="1.200"/>
<text x="526.300" y="589.500" font-size="13.500" font-style="italic" fill="#dcdcdc" letter-spacing="-.3">fx</text><path d="M539 590.500H542.600L540.800 592.600Z" fill="#dcdcdc"/>
<rect x="554" y="579.700" width="13.200" height="10.300" rx="1" fill="#dcdcdc"/><circle cx="560.600" cy="584.800" r="3.300" fill="#535353"/>
<circle cx="588" cy="584.600" r="5" fill="none" stroke="#dcdcdc" stroke-width="1.100"/><path d="M584.460 588.140A5 5 0 0 0 591.540 581.060Z" fill="#dcdcdc"/><path d="M593.500 590.500H597.100L595.300 592.600Z" fill="#dcdcdc"/>
<use href="#folder" x="608.600" y="579.700" transform="translate(608.600 579.700) scale(.88) translate(-608.600 -579.700)"/>
<rect x="637.300" y="579.500" width="10.400" height="10.600" fill="none" stroke="#dcdcdc" stroke-width="1.100"/><path d="M642.500 582V587.600M639.700 584.800H645.300" stroke="#dcdcdc" stroke-width="1.100"/>
<path d="M665 581.200H675.200M667.800 581V579.500H672.400V581" fill="none" stroke="#dcdcdc" stroke-width="1.100"/><path d="M666 582.500H674.200L673.500 591H666.700Z" fill="none" stroke="#dcdcdc" stroke-width="1.100"/><path d="M668.300 583.500V590M670.100 583.500V590M671.900 583.500V590" stroke="#dcdcdc" stroke-width=".8"/>
<rect x="455.300" y="598.800" width="249.100" height="8.200" fill="#4a4a4a"/><path d="M455.300 598.800H704.400" stroke="#3c3c3c" stroke-width=".8"/>
<path d="M570 602.700H589" stroke="#3a3a3a" stroke-width="3" stroke-dasharray=".8 1.100"/>
</svg>
<svg id="mag" class="abs" style="left:380px;top:330px" width="210" height="210" viewBox="380 330 210 210" font-family="Liberation Sans,Arial,sans-serif">
<defs>
<clipPath id="mclip"><circle cx="482" cy="432.300" r="71"/></clipPath>
<filter id="msh" x="-30%" y="-30%" width="160%" height="160%"><feGaussianBlur stdDeviation="8"/></filter>
<pattern id="chk2" width="6.200" height="6.200" patternUnits="userSpaceOnUse" x="478" y="409.600"><rect width="6.200" height="6.200" fill="#fff"/><rect width="3.100" height="3.100" fill="#cfcfcf"/><rect x="3.100" y="3.100" width="3.100" height="3.100" fill="#cfcfcf"/></pattern>
<g id="sob2"><rect x="0" y="0" width="23.500" height="22.300" fill="#414141"/><path d="M8.500 3.300H14.500L19.500 8.300V18.800H12.500V12.800H8.500Z" fill="#dadada"/><path d="M14.500 3.300V8.300H19.500" fill="none" stroke="#414141" stroke-width="1.200"/><rect x="3.200" y="11.600" width="9.800" height="8.200" fill="#414141"/><rect x="4.300" y="12.800" width="7.500" height="6" fill="#dadada"/></g>
</defs>
<circle cx="478" cy="442" r="77" fill="#0d1f27" opacity=".5" filter="url(#msh)"/>
<circle cx="482" cy="432.300" r="77.600" fill="#fff"/>
<g clip-path="url(#mclip)">
<rect x="400" y="350" width="170" height="51" fill="#525252"/>
<rect x="400" y="401" width="170" height="68" fill="#6b6b6b"/>
<rect x="400" y="469" width="170" height="50" fill="#535353"/>
<rect x="400" y="350" width="43.600" height="119" fill="#5b8a37"/>
<rect x="400" y="469" width="43.600" height="50" fill="#b28e18"/>
<path d="M400 401H570" stroke="#434343" stroke-width="1.300"/><path d="M400 469.300H570" stroke="#4a4a4a" stroke-width="1"/>
<path d="M443.600 350V520" stroke="#444" stroke-width="1" opacity=".5"/>
<rect x="478" y="341" width="52.700" height="51.500" fill="url(#chk2)" stroke="#3b3b3b" stroke-width="1.200"/>
<use href="#sob2" x="506.800" y="370.300"/>
<path d="M474.700 426V406.700H494.500M513 406.700H533.300V426M533.300 444V463.600H513M494.500 463.600H474.700V444" fill="none" stroke="#f4f4f4" stroke-width="1.600"/>
<rect x="478.600" y="410.300" width="51.600" height="49.800" fill="url(#chk2)" stroke="#323232" stroke-width="2.300"/>
<rect x="505.800" y="437.300" width="25.500" height="24" fill="#323232"/><use href="#sob2" x="506.900" y="438.400"/>
<path d="M506.500 429.500L509.500 431.500L506.500 433.500" fill="none" stroke="#e8534e" stroke-width=".9"/><path d="M500 441.500H504M502.500 444H505" stroke="#555" stroke-width=".8"/>
<path d="M538 433V429.800A4.800 4.800 0 0 1 547.600 429.800V433M538 437V440.200A4.800 4.800 0 0 0 547.600 440.200V437" fill="none" stroke="#f0f0f0" stroke-width="2.100"/><path d="M542.800 429.500V440.500" stroke="#f0f0f0" stroke-width="2.300"/>
<g transform="translate(420 435.300)"><path d="M-10.400 0C-7-4.700-3.600-6.300 0-6.300S7-4.700 10.400 0C7 4.700 3.600 6.300 0 6.300S-7 4.700-10.400 0Z" fill="#f3f3f3"/><circle r="4" fill="#5b8a37"/><circle r="1.900" fill="#f3f3f3"/></g>
<path d="M454.300 482.500L459.300 490L454.300 497.500" fill="none" stroke="#e6e6e6" stroke-width="1.600"/>
<path d="M470.700 480.300H479L480.800 482.600H493.300V497.400H470.700Z" fill="#dedede"/><path d="M471 478.700H479.500" stroke="#dedede" stroke-width="1.400"/>
<text x="511" y="495.600" font-size="16.500" fill="#f0f0f0" stroke="#f0f0f0" stroke-width=".45" letter-spacing=".4">Jacket</text>
</g>
</svg>
<!--/PANEL-->
<div id="wm">gfxtra.com</div>

</div>
</body>
</html>
